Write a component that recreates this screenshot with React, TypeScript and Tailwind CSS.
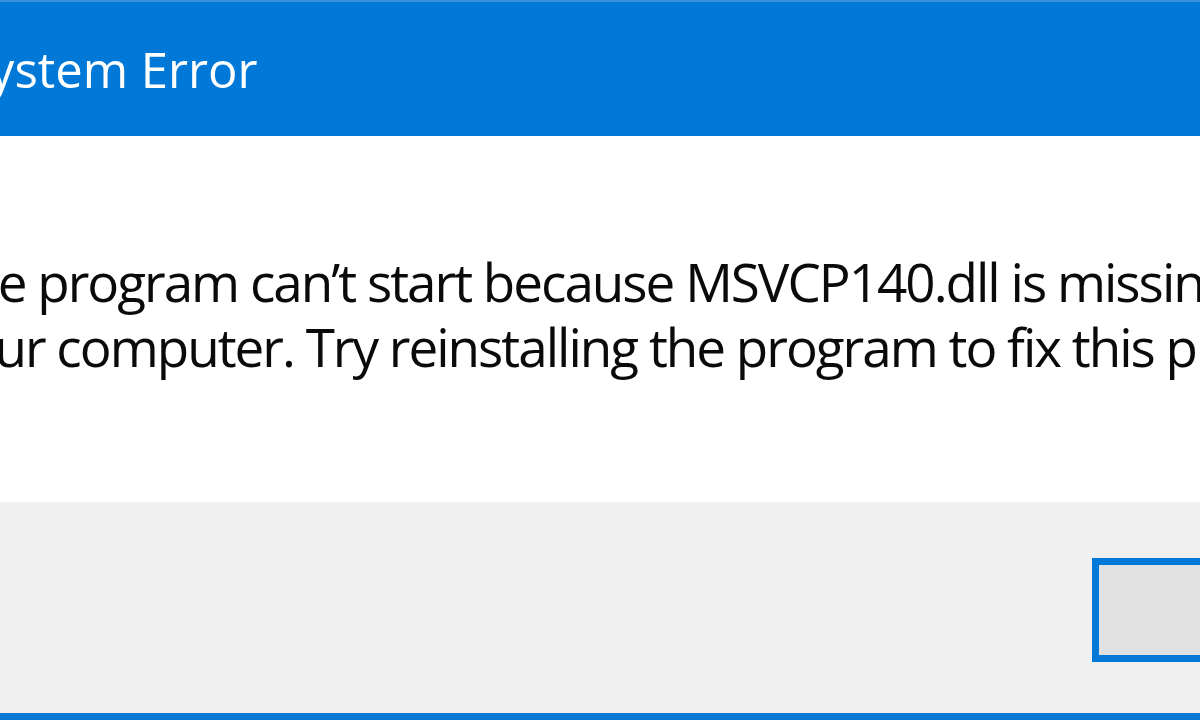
const App = () => {
  return (
    <div className="w-[1200px] h-[720px] overflow-hidden bg-white">
      <div
        className="-ml-[80px] w-[1480px] h-full flex flex-col border-t-2 border-t-[#3a8fdc] border-b-[7px] border-b-[#0a79d6]"
        style={{ fontFamily: '"Open Sans", "Noto Sans", sans-serif' }}
      >
        {/* title bar */}
        <div className="h-[134px] bg-[#0078d7] flex items-center pl-[43px]">
          <span className="text-[49px] leading-none text-white whitespace-nowrap">System Error</span>
        </div>

        {/* message */}
        <div className="h-[366px] bg-white pt-[113px] pl-[20px] text-[#0a0a0a] text-[53px] leading-[65px] tracking-[-2px] whitespace-nowrap">
          <p>The program can&rsquo;t start because MSVCP140.dll is missing from</p>
          <p>your computer. Try reinstalling the program to fix this problem.</p>
        </div>

        {/* footer */}
        <div className="flex-1 bg-[#f0f0f0] flex items-start pt-[56px] pl-[1172px]">
          <button className="w-[300px] h-[104px] bg-[#e1e1e1] border-[7px] border-[#0078d7] text-black text-[46px]">
            OK
          </button>
        </div>
      </div>
    </div>
  );
};

export default App;
